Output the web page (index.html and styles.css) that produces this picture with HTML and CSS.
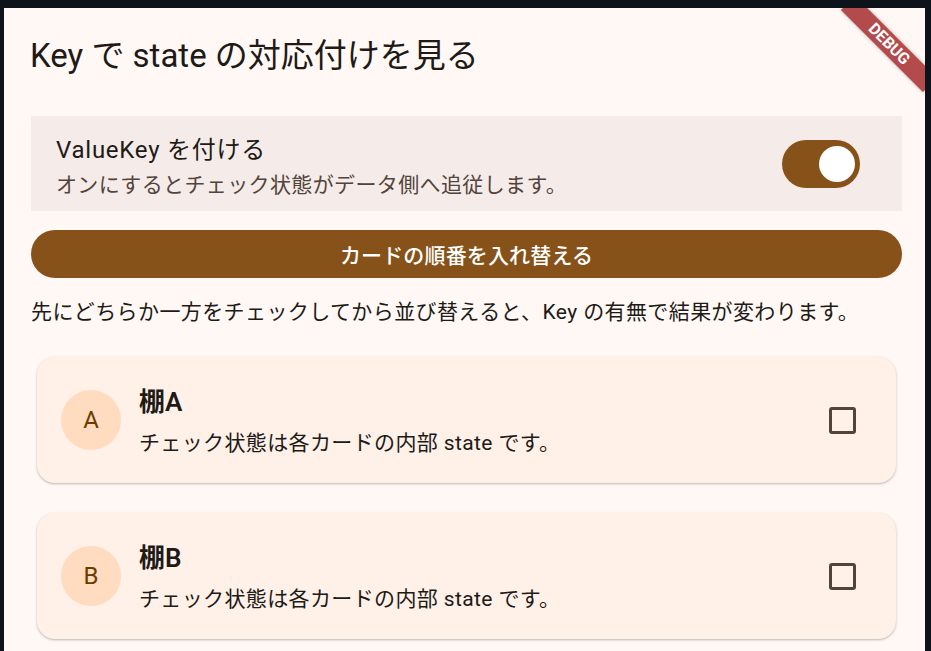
FILE: index.html
```html
<!DOCTYPE html>
<html lang="ja">
<head>
    <meta charset="UTF-8">
    <meta name="viewport" content="width=device-width, initial-scale=1.0">
    <title>Key で state の対応付けを見る</title>
    <link rel="stylesheet" href="styles.css">
</head>
<body>
    <div class="app">
        <header class="app-bar">
            <h1 class="app-title">Key で state の対応付けを見る</h1>
        </header>

        <main class="content">
            <div class="switch-tile">
                <div class="switch-text">
                    <div class="switch-title">ValueKey を付ける</div>
                    <div class="switch-subtitle">オンにするとチェック状態がデータ側へ追従します。</div>
                </div>
                <div class="switch is-on" role="switch" aria-checked="true">
                    <span class="switch-thumb"></span>
                </div>
            </div>

            <button class="shuffle-button">カードの順番を入れ替える</button>

            <p class="hint">先にどちらか一方をチェックしてから並び替えると、Key の有無で結果が変わります。</p>

            <div class="card-list">
                <div class="shelf-card">
                    <div class="avatar">A</div>
                    <div class="shelf-text">
                        <div class="shelf-title">棚A</div>
                        <div class="shelf-subtitle">チェック状態は各カードの内部 state です。</div>
                    </div>
                    <span class="checkbox"></span>
                </div>
                <div class="shelf-card">
                    <div class="avatar">B</div>
                    <div class="shelf-text">
                        <div class="shelf-title">棚B</div>
                        <div class="shelf-subtitle">チェック状態は各カードの内部 state です。</div>
                    </div>
                    <span class="checkbox"></span>
                </div>
            </div>
        </main>

        <div class="debug-banner">DEBUG</div>
    </div>
</body>
</html>
```

FILE: styles.css
```css
:root {
    --frame: #0c131b;
    --surface: #fff8f5;
    --tile: #f5ece9;
    --primary: #86521a;
    --on-surface: #201a17;
    --on-surface-variant: #52443c;
    --card: #fff0e8;
    --avatar: #ffdcbf;
    --avatar-text: #6b3c00;
}

* {
    margin: 0;
    padding: 0;
    box-sizing: border-box;
}

body {
    font-family: Roboto, "Noto Sans CJK JP", sans-serif;
    background: var(--frame);
    color: var(--on-surface);
}

.app {
    position: relative;
    margin: 8px 6px 0 4px;
    height: 643px;
    background: var(--surface);
    overflow: hidden;
}

/* App bar */
.app-bar {
    height: 96px;
    display: flex;
    align-items: center;
    padding-left: 26px;
}

.app-title {
    font-size: 33px;
    font-weight: 400;
    line-height: 40px;
    color: var(--on-surface);
}

.content {
    padding: 12px 23px 0 27px;
}

/* Switch list tile */
.switch-tile {
    height: 95px;
    background: var(--tile);
    display: flex;
    align-items: flex-start;
    padding: 16px 42px 0 25px;
}

.switch-text {
    flex: 1;
}

.switch-title {
    font-size: 24px;
    line-height: 36px;
    letter-spacing: 0.75px;
}

.switch-subtitle {
    font-size: 21px;
    line-height: 30px;
    letter-spacing: 0.375px;
    color: var(--on-surface-variant);
    margin-top: 2px;
}

.switch {
    margin-top: 8px;
    width: 78px;
    height: 48px;
    border-radius: 24px;
    background: var(--primary);
    display: flex;
    align-items: center;
    justify-content: flex-end;
    padding-right: 5px;
}

.switch-thumb {
    width: 36px;
    height: 36px;
    border-radius: 50%;
    background: #fff;
}

/* Button */
.shuffle-button {
    display: block;
    width: 100%;
    height: 48px;
    margin-top: 19px;
    border: none;
    border-radius: 24px;
    background: var(--primary);
    color: #fff;
    font-family: inherit;
    font-size: 21px;
    font-weight: 500;
    letter-spacing: 0.15px;
}

.hint {
    margin-top: 19px;
    font-size: 21px;
    line-height: 30px;
    letter-spacing: 0.4px;
    color: var(--on-surface);
}

/* Cards */
.card-list {
    margin-top: 24px;
    display: flex;
    flex-direction: column;
    gap: 18px;
}

.shelf-card {
    margin: 6px;
    height: 126px;
    background: var(--card);
    border-radius: 18px;
    box-shadow: 0 1px 3px rgba(0, 0, 0, 0.22), 0 1px 1px rgba(0, 0, 0, 0.06);
    display: flex;
    align-items: center;
    padding: 0 40px 0 24px;
}

.avatar {
    width: 60px;
    height: 60px;
    border-radius: 50%;
    background: var(--avatar);
    color: var(--avatar-text);
    font-size: 24px;
    display: flex;
    align-items: center;
    justify-content: center;
    flex-shrink: 0;
}

.shelf-text {
    flex: 1;
    margin-left: 18px;
    padding-top: 3px;
}

.shelf-title {
    font-size: 26px;
    font-weight: 600;
    line-height: 35px;
}

.shelf-subtitle {
    margin-top: 8px;
    font-size: 21px;
    line-height: 30px;
    letter-spacing: 0.375px;
    color: var(--on-surface);
}

.checkbox {
    width: 27px;
    height: 27px;
    border: 3px solid var(--on-surface-variant);
    border-radius: 3px;
    flex-shrink: 0;
}

/* Debug ribbon */
.debug-banner {
    position: absolute;
    left: 827px;
    top: 26px;
    width: 116px;
    height: 20px;
    transform: rotate(45deg);
    background: #b34a4b;
    box-shadow: 0 0 4px rgba(0, 0, 0, 0.3);
    color: #fff;
    font-family: Roboto, sans-serif;
    font-size: 16px;
    font-weight: 700;
    line-height: 20px;
    text-align: center;
}
```
